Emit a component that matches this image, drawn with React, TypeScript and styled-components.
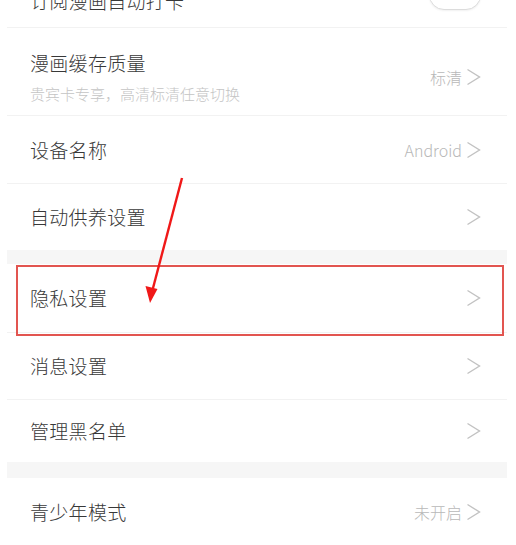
import React from 'react';
import styled, { createGlobalStyle } from 'styled-components';

const GlobalStyle = createGlobalStyle`
  html, body {
    margin: 0;
    padding: 0;
    background: #ffffff;
  }
  body {
    font-family: "Noto Sans CJK SC", "Noto Sans", sans-serif;
    overflow: hidden;
  }
`

const Screen = styled.div`
  position: relative;
  width: 516px;
  height: 545px;
  overflow: hidden;
  background: #fff;
`

const List = styled.div`
  display: flex;
  flex-direction: column;
  margin: -25px 9px 0 7px;
`

const Row = styled.div<{ $h: number; $top?: number; $bottom?: number }>`
  display: flex;
  flex-direction: row;
  align-items: center;
  justify-content: space-between;
  box-sizing: border-box;
  height: ${(p) => p.$h}px;
  padding: ${(p) => p.$top || 0}px 26px ${(p) => p.$bottom || 0}px 23px;
  background: #fff;
`

const TextBlock = styled.div`
  display: flex;
  flex-direction: column;
`

const Title = styled.div`
  font-size: 19px;
  font-weight: 300;
  line-height: 26px;
  color: #383838;
  letter-spacing: 0.3px;
`

const Subtitle = styled.div`
  margin-top: 8px;
  font-size: 15px;
  font-weight: 300;
  line-height: 20px;
  color: #c4c4c4;
`

const Trailing = styled.div`
  display: flex;
  align-items: center;
  gap: 4px;
`

const Value = styled.span`
  font-size: 16px;
  font-weight: 300;
  color: #b8b8b8;
`

const Divider = styled.div`
  height: 1px;
  background: #f2f2f2;
`

const Band = styled.div<{ $h: number }>`
  height: ${(p) => p.$h}px;
  background: #f6f6f6;
`

const Toggle = styled.div`
  width: 50px;
  height: 28px;
  margin-bottom: 12px;
  border: 1.5px solid #dcdcdc;
  border-radius: 16px;
  background: #fff;
  box-shadow: 0 1px 2px rgba(0, 0, 0, 0.06);
`

const Highlighted = styled.div`
  position: relative;
`

const RedBox = styled.div`
  position: absolute;
  left: 9px;
  right: 3px;
  top: 1px;
  bottom: -4px;
  border: 2px solid #e25550;
  pointer-events: none;
`

const ArrowLayer = styled.svg`
  position: absolute;
  left: 140px;
  top: 170px;
  pointer-events: none;
`

const Chevron = () => (
  <svg width="15" height="18" viewBox="0 0 15 18">
    <polyline
      points="1.5,1.5 13.5,9 1.5,16.5"
      fill="none"
      stroke="#c2c2c2"
      strokeWidth="1.4"
      strokeLinejoin="miter"
    />
  </svg>
)

type Item = { title: string; value?: string }

const SimpleRow = ({ item, h }: { item: Item; h: number }) => (
  <Row $h={h}>
    <Title>{item.title}</Title>
    <Trailing>
      {item.value && <Value>{item.value}</Value>}
      <Chevron />
    </Trailing>
  </Row>
)

const App = () => {
  return (
    <Screen>
      <GlobalStyle />
      <List>
        <Row $h={52}>
          <Title>订阅漫画自动打卡</Title>
          <Toggle />
        </Row>
        <Divider />

        <Row $h={87} $top={22} $bottom={11}>
          <TextBlock>
            <Title>漫画缓存质量</Title>
            <Subtitle>贵宾卡专享，高清标清任意切换</Subtitle>
          </TextBlock>
          <Trailing>
            <Value>标清</Value>
            <Chevron />
          </Trailing>
        </Row>
        <Divider />

        <SimpleRow item={{ title: '设备名称', value: 'Android' }} h={67} />
        <Divider />
        <SimpleRow item={{ title: '自动供养设置' }} h={66} />

        <Band $h={14} />

        <Highlighted>
          <SimpleRow item={{ title: '隐私设置' }} h={68} />
          <RedBox />
        </Highlighted>
        <Divider />
        <SimpleRow item={{ title: '消息设置' }} h={66} />
        <Divider />
        <SimpleRow item={{ title: '管理黑名单' }} h={62} />

        <Band $h={16} />

        <SimpleRow item={{ title: '青少年模式', value: '未开启' }} h={67} />
      </List>

      <ArrowLayer width="50" height="140" viewBox="0 0 50 140">
        <line x1="42" y1="8" x2="12.5" y2="120" stroke="#f01818" strokeWidth="2.4" />
        <polygon points="10,133 5.5,116 17.5,119" fill="#f01818" />
      </ArrowLayer>
    </Screen>
  );
};

export default App;
